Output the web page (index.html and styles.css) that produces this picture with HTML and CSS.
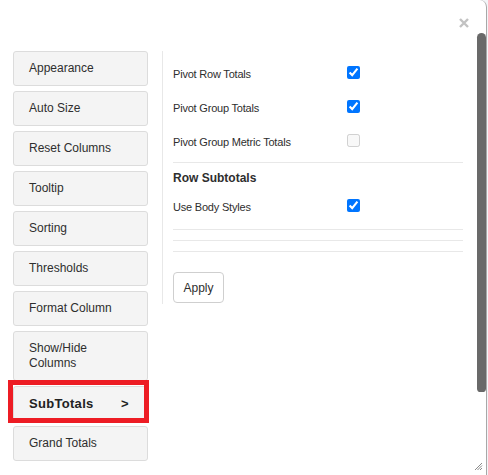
FILE: index.html
```html
<!DOCTYPE html>
<html>
<head>
<meta charset="utf-8">
<link rel="stylesheet" href="styles.css">
</head>
<body>
<div class="modal">
  <div class="header">
    <button class="close" aria-label="Close">
      <svg width="10" height="10" viewBox="0 0 10 10"><path d="M1 1L9 9M9 1L1 9" stroke="#c2c2c2" stroke-width="2.4" stroke-linecap="butt"/></svg>
    </button>
  </div>
  <div class="content">
    <div class="menu">
      <div class="menu-btn">Appearance</div>
      <div class="menu-btn">Auto Size</div>
      <div class="menu-btn">Reset Columns</div>
      <div class="menu-btn">Tooltip</div>
      <div class="menu-btn">Sorting</div>
      <div class="menu-btn">Thresholds</div>
      <div class="menu-btn">Format Column</div>
      <div class="menu-btn">Show/Hide<br>Columns</div>
      <div class="menu-btn active"><span>SubTotals</span><span>&gt;</span><div class="highlight"></div></div>
      <div class="menu-btn">Grand Totals</div>
    </div>
    <div class="panel">
      <div class="row"><label class="lbl">Pivot Row Totals</label><input type="checkbox" checked></div>
      <div class="row"><label class="lbl">Pivot Group Totals</label><input type="checkbox" checked></div>
      <div class="row"><label class="lbl">Pivot Group Metric Totals</label><input type="checkbox" disabled></div>
      <div class="sep"></div>
      <div class="heading">Row Subtotals</div>
      <div class="row"><label class="lbl">Use Body Styles</label><input type="checkbox" checked></div>
      <div class="sep first"></div>
      <div class="sep gap"></div>
      <div class="sep gap"></div>
      <button class="apply">Apply</button>
    </div>
  </div>
  <div class="thumb"></div>
  <svg class="grip" width="9" height="9" viewBox="0 0 9 9"><path d="M8 1L1 8M8 3.5L3.5 8M8 6L6 8" stroke="#8a8a8a" stroke-width="1"/></svg>
</div>
</body>
</html>
```
FILE: styles.css
```css
html, body {
  margin: 0;
  padding: 0;
}
body {
  width: 488px;
  height: 475px;
  overflow: hidden;
  background: #f3f5f8;
  font-family: "Liberation Sans", Arial, sans-serif;
  color: #333;
}
.modal {
  position: relative;
  box-sizing: border-box;
  width: 487px;
  height: 475px;
  background: #fff;
  border-right: 1px solid #a8a8a8;
  border-top-right-radius: 7px;
}
.header {
  height: 51px;
  display: flex;
  justify-content: flex-end;
  align-items: flex-start;
}
.close {
  margin: 18px 17px 0 0;
  padding: 0;
  border: 0;
  background: none;
  width: 10px;
  height: 10px;
  display: flex;
}
.content {
  display: flex;
  align-items: flex-start;
  padding-left: 13px;
}
.menu {
  width: 135px;
  display: flex;
  flex-direction: column;
  gap: 5px;
}
.menu-btn {
  position: relative;
  box-sizing: border-box;
  padding: 9px 15px;
  line-height: 15px;
  font-size: 12px;
  border: 1px solid #dcdcdc;
  border-radius: 3px;
  background: #f4f4f4;
  color: #2e2e2e;
}
.menu-btn.active {
  display: flex;
  justify-content: space-between;
  font-weight: bold;
  font-size: 13px;
  letter-spacing: 0.3px;
  color: #222;
  padding-right: 18px;
}
.highlight {
  position: absolute;
  left: -6px;
  top: -7px;
  width: 141px;
  height: 43px;
  box-sizing: border-box;
  border: 5px solid #ed1c24;
}
.panel {
  margin-left: 14px;
  border-left: 1px solid #e8e8e8;
  padding: 5px 0 1px 10px;
  width: 290px;
}
.row {
  display: flex;
  align-items: center;
  height: 34px;
}
.lbl {
  width: 174px;
  padding-top: 2px;
  font-size: 11px;
  letter-spacing: -0.2px;
  color: #2e2e2e;
}
.row input {
  margin: 0 0 2px 0;
  width: 13px;
  height: 13px;
  accent-color: #0075ff;
}
.sep {
  border-top: 1px solid #e8e8e8;
  margin-top: 4px;
}
.sep.first {
  margin-top: 6px;
}
.sep.gap {
  margin-top: 10px;
}
.heading {
  padding: 8px 0 4px;
  line-height: 14px;
  font-size: 12px;
  font-weight: bold;
  color: #2e2e2e;
}
.apply {
  display: block;
  margin-top: 20px;
  width: 51px;
  height: 31px;
  padding: 0;
  border: 1px solid #cfcfcf;
  border-radius: 4px;
  background: #fff;
  font-family: "Liberation Sans", Arial, sans-serif;
  font-size: 12px;
  color: #2e2e2e;
}
.thumb {
  position: absolute;
  left: 477px;
  top: 33px;
  width: 9px;
  height: 359px;
  border-radius: 5px 5px 4px 4px;
  background: #696969;
}
.grip {
  position: absolute;
  left: 474px;
  top: 462px;
}
```
